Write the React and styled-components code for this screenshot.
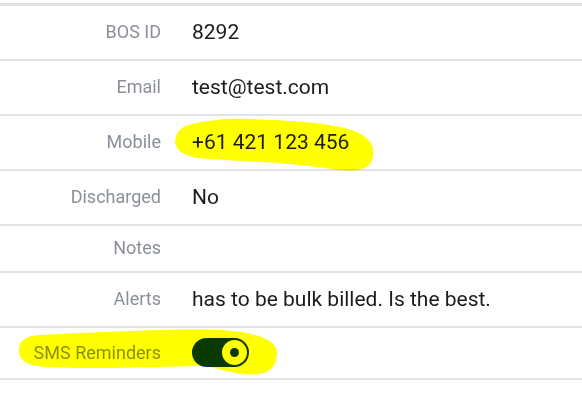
import React from "react";
import styled, { createGlobalStyle } from "styled-components";

const GlobalStyle = createGlobalStyle`
  body {
    margin: 0;
    background: #fff;
    font-family: Roboto, "Liberation Sans", sans-serif;
  }
`;

const Page = styled.div`
  position: relative;
  width: 582px;
  height: 409px;
  padding-top: 3px;
  box-sizing: border-box;
  overflow: hidden;
`;

const DetailList = styled.div`
  border-top: 3px solid #dfe1e4;
`;

const Row = styled.div`
  display: grid;
  grid-template-columns: 161px 1fr;
  column-gap: 31px;
  align-items: center;
  padding: 10px 0 11px;
  border-bottom: 2px solid #e1e3e6;
`;

const Label = styled.div`
  text-align: right;
  color: #8b9098;
  font-size: 18px;
  line-height: 24px;
`;

const Value = styled.div`
  color: #1c1c1e;
  font-size: 21px;
  line-height: 32px;
`;

const Toggle = styled.div`
  width: 57px;
  height: 29px;
  border-radius: 15px;
  background: ${(p) => (p.on ? "#0b3a52" : "#c5c9cf")};
  display: flex;
  align-items: center;
  justify-content: ${(p) => (p.on ? "flex-end" : "flex-start")};
  padding: 0 2px;
  box-sizing: border-box;
`;

const Knob = styled.div`
  width: 25px;
  height: 25px;
  border-radius: 50%;
  background: #fff;
  display: flex;
  align-items: center;
  justify-content: center;

  &::after {
    content: "";
    width: 9px;
    height: 9px;
    border-radius: 50%;
    background: #0b3a52;
  }
`;

const Marker = styled.svg`
  position: absolute;
  inset: 0;
  pointer-events: none;
  mix-blend-mode: multiply;
`;

const details = [
  { label: "BOS ID", value: "8292" },
  { label: "Email", value: "test@test.com" },
  { label: "Mobile", value: "+61 421 123 456" },
  { label: "Discharged", value: "No" },
  { label: "Notes", value: "" },
  { label: "Alerts", value: "has to be bulk billed. Is the best." },
];

const App = () => {
  return (
    <Page>
      <GlobalStyle />
      <DetailList>
        {details.map((d) => (
          <Row key={d.label}>
            <Label>{d.label}</Label>
            {d.value ? <Value>{d.value}</Value> : <div />}
          </Row>
        ))}
        <Row>
          <Label>SMS Reminders</Label>
          <div>
            <Toggle on>
              <Knob />
            </Toggle>
          </div>
        </Row>
      </DetailList>

      <Marker width="582" height="409" viewBox="0 0 582 409">
        <path
          fill="#ffff00"
          d="M175 143 C175 132 182 126 192 124 C210 120 228 118 250 119 C280 120 310 121 340 127 C358 131 370 137 373 148 C375 160 370 168 358 170 C345 172 330 168 300 165 C270 162 240 161 210 159 C190 158 178 154 175 143 Z"
        />
        <path
          fill="#ffff00"
          d="M19 350 C19 340 26 336 40 335 C80 333 120 331 160 330 C200 329 235 329 255 335 C270 339 277 345 277 353 C277 366 270 373 258 374 C240 376 225 370 205 366 C180 366 140 368 100 368 C70 368 45 368 32 365 C22 362 19 357 19 350 Z"
        />
      </Marker>
    </Page>
  );
};

export default App;
